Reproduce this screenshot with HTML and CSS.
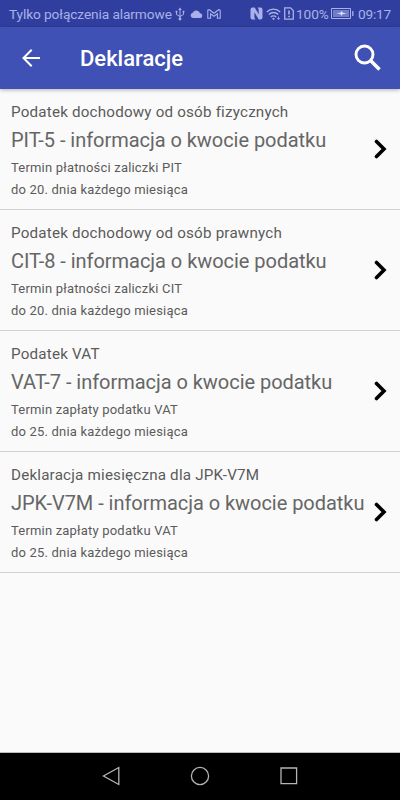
FILE: index.html
```html
<!DOCTYPE html>
<html lang="pl">
<head>
<meta charset="utf-8">
<title>Deklaracje</title>
<link rel="stylesheet" href="styles.css">
</head>
<body>
<div class="screen">
  <div class="status">
    <span class="network">Tylko połączenia alarmowe</span>
    <svg class="usb" width="10" height="14" viewBox="0 0 10 14" fill="none" stroke="currentColor"><path d="M5 2v10M1.500 5v2.500L5 9.500l3.500-2V5"/><path d="M5 .5L3.300 3h3.400zM.6 3.800h1.800v1.800H.6zM7.600 3.800h1.800v1.800H7.600z" fill="currentColor" stroke="none"/><circle cx="5" cy="12" r="1.400" fill="currentColor" stroke="none"/></svg>
    <svg class="cloud" width="13" height="8" viewBox="0 0 13 8" fill="currentColor"><path d="M3 8a2.700 2.700 0 0 1-.3-5.300A4 4 0 0 1 10 3.200 2.450 2.450 0 0 1 10.500 8z"/></svg>
    <svg class="mail" width="14" height="10" viewBox="0 0 14 10" fill="none" stroke="currentColor" stroke-width="1.100"><path d="M.8 9.300V1.200l1.600-.5L7 4.300 11.600.7l1.600.5v8.100h-2.800V4.800L7 7.300 3.600 4.800v4.500z"/></svg>
    <svg class="nfc" width="13" height="13" viewBox="0 0 13 13"><path d="M2.500.5h2.200l4 6.700V2.500L7.700.5h2.800q2 0 2 2v8q0 2-2 2H8.800L4.400 5.300v5.200l1 2H2.500q-2 0-2-2v-8q0-2 2-2z" fill="currentColor"/></svg>
    <svg class="wifi" width="15" height="12" viewBox="0 0 15 12" fill="none" stroke="currentColor" stroke-width="1.300"><path d="M.8 4a9.300 9.300 0 0 1 13.400 0M2.800 6.500a6.500 6.500 0 0 1 9.400 0M4.800 9a3.800 3.800 0 0 1 5.400 0"/><circle cx="7.500" cy="10.800" r="1.100" fill="currentColor" stroke="none"/><path d="M12.500 8.500v3M11 10l1.500 1.500L14 10" stroke-width=".8"/></svg>
    <svg class="sim" width="10" height="13" viewBox="0 0 10 13" fill="none" stroke="currentColor" stroke-width="1.300"><path d="M.7.8h5.800l2.800 2.800v8.600H.7z"/><path d="M5 3.500v4M5 8.700v1.500" stroke-width="1.600"/></svg>
    <span class="percent">100%</span>
    <svg class="battery" width="23" height="11" viewBox="0 0 23 11" fill="none" stroke="currentColor"><path d="M.5.5h19v10H.5z"/><path d="M2 2h16v7H2z" fill="currentColor" stroke="none" opacity=".55"/><path d="M21.800 3v5" stroke-width="1.300"/><path d="M5.500 5.300L10 4.500l.5-1.800 1.300 2 3.700.8-4.300.7-.7 1.800-1.200-2z" fill="#dce0ff" stroke="none"/></svg>
    <span class="clock">09:17</span>
  </div>
  <header class="toolbar">
    <svg class="back" width="18" height="18" viewBox="0 0 18 18" fill="none" stroke="#fff" stroke-width="2"><path d="M18 9H1.500M9.700.8L1.500 9l8.200 8.200"/></svg>
    <h1>Deklaracje</h1>
    <svg class="search" width="28" height="28" viewBox="0 0 28 28" fill="none" stroke="#fff"><circle cx="10.500" cy="10.500" r="8.500" stroke-width="2.900"/><path d="M16.800 16.800l8.700 8.700" stroke-width="3.500"/></svg>
  </header>
  <main class="list">
    <article class="row">
      <div class="text">
        <p class="category">Podatek dochodowy od osób fizycznych</p>
        <h2>PIT-5 - informacja o kwocie podatku</h2>
        <p class="term">Termin płatności zaliczki PIT</p>
        <p class="term">do 20. dnia każdego miesiąca</p>
      </div>
      <svg class="chevron" width="13" height="20" viewBox="0 0 13 20"><path d="M2.500 2.500l7.500 7.500-7.500 7.500"/></svg>
    </article>
    <article class="row">
      <div class="text">
        <p class="category">Podatek dochodowy od osób prawnych</p>
        <h2>CIT-8 - informacja o kwocie podatku</h2>
        <p class="term">Termin płatności zaliczki CIT</p>
        <p class="term">do 20. dnia każdego miesiąca</p>
      </div>
      <svg class="chevron" width="13" height="20" viewBox="0 0 13 20"><path d="M2.500 2.500l7.500 7.500-7.500 7.500"/></svg>
    </article>
    <article class="row">
      <div class="text">
        <p class="category">Podatek VAT</p>
        <h2>VAT-7 - informacja o kwocie podatku</h2>
        <p class="term">Termin zapłaty podatku VAT</p>
        <p class="term">do 25. dnia każdego miesiąca</p>
      </div>
      <svg class="chevron" width="13" height="20" viewBox="0 0 13 20"><path d="M2.500 2.500l7.500 7.500-7.500 7.500"/></svg>
    </article>
    <article class="row">
      <div class="text">
        <p class="category">Deklaracja miesięczna dla JPK-V7M</p>
        <h2>JPK-V7M - informacja o kwocie podatku</h2>
        <p class="term">Termin zapłaty podatku VAT</p>
        <p class="term">do 25. dnia każdego miesiąca</p>
      </div>
      <svg class="chevron" width="13" height="20" viewBox="0 0 13 20"><path d="M2.500 2.500l7.500 7.500-7.500 7.500"/></svg>
    </article>
  </main>
  <nav class="navbar">
    <svg width="20" height="20" viewBox="0 0 20 20"><path d="M17.800 1.500v17L2.500 10z"/></svg>
    <svg width="20" height="20" viewBox="0 0 20 20"><circle cx="10" cy="10" r="8.600"/></svg>
    <svg width="20" height="20" viewBox="0 0 20 20"><path d="M2 2h15.600v15.600H2z"/></svg>
  </nav>
</div>
</body>
</html>
```

FILE: styles.css
```css
* { box-sizing: border-box; }
body { margin: 0; font-family: Roboto, "Noto Sans", sans-serif; background: #fafafa; }
h1, h2, p { margin: 0; font-weight: 400; }
svg { display: block; flex: none; }
.screen { width: 400px; height: 800px; display: flex; flex-direction: column; overflow: hidden; }
.status { height: 27px; background: #303f9f; color: #a9b1e8; display: flex; align-items: center; padding: 0 0 0 9px; font-size: 13.700px; line-height: 28px; white-space: nowrap; flex: none; }
.network { width: 166px; letter-spacing: -.1px; }
.cloud { margin-left: 5px; }
.mail { margin-left: 4px; }
.nfc { margin-left: 29px; }
.wifi { margin-left: 3px; }
.sim { margin-left: 3px; }
.percent { width: 32px; margin-left: 2px; letter-spacing: -.1px; }
.battery { margin-left: 3px; }
.clock { margin-left: 4px; letter-spacing: -.2px; }
.toolbar { height: 62px; flex: none; background: #3f51b5; display: flex; align-items: center; padding: 0 18px 0 22px; box-shadow: 0 1px 4px rgba(0,0,0,.3); position: relative; }
h1 { flex: 1; margin-left: 40px; padding-top: 1px; font-size: 22px; line-height: 30px; font-weight: 500; color: #fff; }
.list { flex: 1; border-bottom: 1px solid #bdbdbd; }
.row { height: 121px; border-bottom: 1px solid #d2d2d2; display: flex; align-items: center; padding: 0 13px 0 11px; color: #5b5b5b; }
.text { flex: 1; white-space: nowrap; align-self: flex-start; padding-top: 11px; }
.category { font-size: 15.200px; line-height: 24px; letter-spacing: .19px; }
h2 { font-size: 20px; line-height: 33px; color: #666; letter-spacing: -.04px; }
.term { font-size: 13px; line-height: 22px; letter-spacing: .19px; }
.chevron { fill: none; stroke: #000; stroke-width: 3.600; stroke-linecap: round; }
.navbar { height: 47px; flex: none; background: #000; display: flex; justify-content: center; align-items: center; gap: 69px; padding-bottom: 1px; }
.navbar svg { fill: none; stroke: #b5b5b5; stroke-width: 1.300; }
```
